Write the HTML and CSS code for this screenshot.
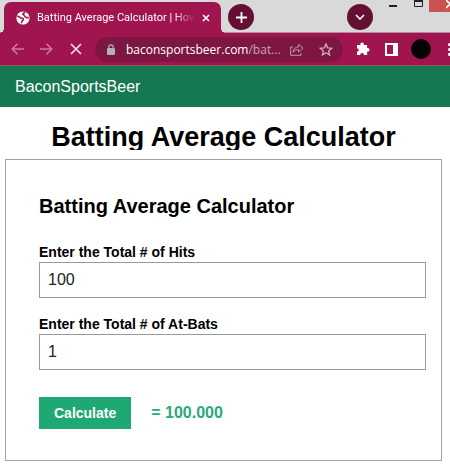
FILE: index.html
```html
<!DOCTYPE html>
<html lang="en">
<head>
    <meta charset="UTF-8">
    <meta name="viewport" content="width=device-width, initial-scale=1.0">
    <title>Batting Average Calculator</title>
    <link rel="stylesheet" href="styles.css">
</head>
<body>
    <div class="browser">
        <div class="tabstrip">
            <div class="tab">
                <svg class="favicon" width="14" height="14" viewBox="0 0 14 14">
                    <circle cx="7" cy="7" r="6.6" fill="#fff"/>
                    <path d="M1.2 5.2C3.4 4.9 3.6 7.1 6 7.2C8 7.3 7.6 9.2 6.4 9.8C5.4 10.5 5.8 11.4 5.2 12.2M9.4 1.8C6.8 1.8 6.2 3.4 7.8 4.1C9 4.7 8.6 6.2 10 6.4C11 6.6 11.6 6.9 12.8 6.4" fill="none" stroke="#a0144f" stroke-width="1.6"/>
                </svg>
                <span class="tab-title">Batting Average Calculator | How</span>
                <button class="tab-close" aria-label="Close tab">
                    <svg width="8" height="8" viewBox="0 0 8 8"><path d="M1 1L7 7M7 1L1 7" stroke="#fff" stroke-width="1.6"/></svg>
                </button>
            </div>
            <button class="round" aria-label="New tab">
                <svg width="11" height="11" viewBox="0 0 11 11"><path d="M5.5 0V11M0 5.5H11" stroke="#fff" stroke-width="1.8"/></svg>
            </button>
            <button class="round search-tabs" aria-label="Search tabs">
                <svg width="10" height="6" viewBox="0 0 10 6"><path d="M1 1L5 5L9 1" fill="none" stroke="#fff" stroke-width="1.6"/></svg>
            </button>
            <div class="window-controls">
                <button aria-label="Minimize"><svg width="8" height="12" viewBox="0 0 8 12"><path d="M0 6H8" stroke="#222" stroke-width="2"/></svg></button>
                <button aria-label="Maximize"><svg width="9" height="12" viewBox="0 0 9 12"><path d="M0.5 0V6.5H8.5V0" fill="none" stroke="#222"/><path d="M0 1H9" stroke="#222" stroke-width="2"/></svg></button>
                <button class="window-close" aria-label="Close"><svg width="4" height="12" viewBox="0 0 4 12"><path d="M0 0L4 4L0 8" fill="none" stroke="#fff" stroke-width="1.6"/></svg></button>
            </div>
        </div>
        <div class="toolbar">
            <button class="tool" aria-label="Back">
                <svg width="13" height="12" viewBox="0 0 13 12"><path d="M13 6H1M6.5 0.7L1.2 6L6.5 11.3" fill="none" stroke="#cd7c9c" stroke-width="1.5"/></svg>
            </button>
            <button class="tool" aria-label="Forward">
                <svg width="13" height="12" viewBox="0 0 13 12"><path d="M0 6H12M6.5 0.7L11.8 6L6.5 11.3" fill="none" stroke="#cd7c9c" stroke-width="1.5"/></svg>
            </button>
            <button class="tool" aria-label="Stop">
                <svg width="12" height="12" viewBox="0 0 12 12"><path d="M1 1L11 11M11 1L1 11" stroke="#f6dfe8" stroke-width="1.7"/></svg>
            </button>
            <div class="address">
                <svg width="8" height="11" viewBox="0 0 8 11"><rect y="4" width="8" height="7" rx="1" fill="#b4b1b6"/><path d="M1.8 4.5V3A2.2 2.2 0 0 1 6.2 3V4.5" fill="none" stroke="#b4b1b6" stroke-width="1.2"/></svg>
                <span class="url">baconsportsbeer.com<span class="path">/bat...</span></span>
                <button aria-label="Share">
                    <svg width="14" height="13" viewBox="0 0 14 13"><path d="M3 4H0.7V12.3H11V10" fill="none" stroke="#c394a8"/><path d="M3 9.3C3.3 5.8 5.2 4 8.6 3.9V1.3L13.1 5.2L8.6 9V6.6C6 6.6 4.4 7.3 3 9.3Z" fill="none" stroke="#c394a8"/></svg>
                </button>
                <button class="bookmark" aria-label="Bookmark">
                    <svg width="14" height="13" viewBox="0 0 14 13"><path d="M7 1L8.6 4.8L12.8 5.2L9.7 7.9L10.6 12L7 9.8L3.4 12L4.3 7.9L1.2 5.2L5.4 4.8Z" fill="none" stroke="#d2acbc" stroke-width="1.3"/></svg>
                </button>
            </div>
            <button class="tool" aria-label="Extensions">
                <svg width="14" height="14" viewBox="0 0 14 14"><path d="M1 3H4.3V2.4A1.8 1.8 0 0 1 7.9 2.4V3H11.1V6.1H11.7A1.8 1.8 0 0 1 11.7 9.7H11.1V13H8A1.9 1.9 0 0 0 4.2 13H1V9.8A1.8 1.8 0 0 0 1 6.2Z" fill="#fff"/></svg>
            </button>
            <button class="tool" aria-label="Side panel">
                <svg width="13" height="13" viewBox="0 0 13 13"><path d="M0 0H13V13H0ZM2 2V11H8V2Z" fill="#fff" fill-rule="evenodd"/></svg>
            </button>
            <button class="tool" aria-label="Profile"><span class="avatar"></span></button>
            <button class="menu" aria-label="Menu">
                <svg width="2" height="13" viewBox="0 0 2 13"><g fill="#fff"><circle cx="1.6" cy="1.6" r="1.6"/><circle cx="1.6" cy="6.5" r="1.6"/><circle cx="1.6" cy="11.4" r="1.6"/></g></svg>
            </button>
        </div>
    </div>

    <header class="site-header">
        <a href="#">BaconSportsBeer</a>
    </header>

    <main>
        <h1>Batting Average Calculator</h1>
        <form class="calculator">
            <h2>Batting Average Calculator</h2>
            <label for="hits">Enter the Total # of Hits</label>
            <input type="text" id="hits" value="100">
            <label for="atbats">Enter the Total # of At-Bats</label>
            <input type="text" id="atbats" value="1">
            <div class="actions">
                <button type="button" id="calculate">Calculate</button>
                <output id="result" for="hits atbats">= 100.000</output>
            </div>
        </form>
    </main>

    <script>
        const hits = document.getElementById('hits');
        const atBats = document.getElementById('atbats');
        const result = document.getElementById('result');

        document.getElementById('calculate').addEventListener('click', () => {
            const average = parseFloat(hits.value) / parseFloat(atBats.value);
            result.textContent = '= ' + average.toFixed(3);
        });
    </script>
</body>
</html>
```
FILE: styles.css
```css
* {
    box-sizing: border-box;
}
body {
    margin: 0;
    background-color: #fff;
    color: #000;
    font-family: "Liberation Sans", Arial, sans-serif;
}
button {
    border: none;
    background: none;
    padding: 0;
}

/* browser window */
.browser {
    overflow: hidden;
    font-family: "Open Sans", "Segoe UI", sans-serif;
}
.browser button {
    display: flex;
    flex-shrink: 0;
    align-items: center;
    justify-content: center;
}
.tabstrip {
    display: flex;
    align-items: flex-start;
    height: 33px;
    padding: 2px 0 0 4px;
    background-color: #d9d9d9;
    border-bottom: 1px solid #b58a9c;
}
.tab {
    position: relative;
    display: flex;
    align-items: center;
    width: 217px;
    height: 31px;
    padding: 0 11px 0 12px;
    border-radius: 7px 7px 0 0;
    background-color: #a0144f;
}
.tab::before,
.tab::after {
    content: "";
    position: absolute;
    bottom: 0;
    width: 5px;
    height: 5px;
}
.tab::before {
    right: 100%;
    background: radial-gradient(circle at 0 0, transparent 5px, #a0144f 5px);
}
.tab::after {
    left: 100%;
    background: radial-gradient(circle at 100% 0, transparent 5px, #a0144f 5px);
}
.favicon {
    flex-shrink: 0;
}
.tab-title {
    flex: 1;
    margin: 0 7px;
    overflow: hidden;
    white-space: nowrap;
    font-family: Roboto, "Segoe UI", sans-serif;
    font-size: 11px;
    color: #fff;
    -webkit-mask-image: linear-gradient(to right, #000 86%, transparent);
    mask-image: linear-gradient(to right, #000 86%, transparent);
}
.round {
    width: 26px;
    height: 26px;
    margin: 2px 0 0 7px;
    border-radius: 50%;
    background-color: #650f35;
}
.search-tabs {
    margin-left: auto;
}
.window-controls {
    display: flex;
    gap: 17px;
    margin: -2px 0 0 16px;
}
.browser .window-close {
    justify-content: flex-end;
    width: 21px;
    height: 12px;
    margin-left: -11px;
    background-color: #ca5350;
}
.toolbar {
    display: flex;
    align-items: center;
    height: 33px;
    padding-left: 3px;
    background-color: #a0144f;
    border-bottom: 1px solid #a25170;
}
.tool {
    width: 29px;
    height: 29px;
}
.address {
    display: flex;
    flex: 1;
    align-items: center;
    min-width: 0;
    height: 25px;
    margin: 0 5px;
    padding: 0 10px 0 12px;
    border-radius: 13px;
    background-color: #7d1642;
}
.address svg {
    flex-shrink: 0;
}
.address button {
    margin-left: 8px;
}
.address .bookmark {
    margin-left: 15px;
}
.url {
    flex: 1;
    margin-left: 11px;
    overflow: hidden;
    white-space: nowrap;
    font-size: 12px;
    color: #fff;
}
.path {
    color: #d0a3b5;
}
.avatar {
    width: 20px;
    height: 20px;
    border-radius: 50%;
    background-color: #060304;
}
.browser .menu {
    justify-content: flex-end;
    width: 15px;
    height: 29px;
}

/* page */
.site-header {
    display: flex;
    align-items: center;
    height: 41px;
    padding: 0 15px;
    background-color: #157852;
}
.site-header a {
    color: #fff;
    font-size: 16px;
    text-decoration: none;
}
main {
    padding: 16px 8px 12px 5px;
}
h1 {
    height: 27px;
    margin: 0 0 9px;
    overflow: hidden;
    font-size: 27px;
    line-height: 29px;
    text-align: center;
}
.calculator {
    padding: 34px 15px 31px 33px;
    border: 1px solid #a3a3a3;
}
h2 {
    margin: 0 0 25px;
    font-size: 20px;
    line-height: 24px;
}
label {
    display: block;
    font-size: 14px;
    font-weight: bold;
    line-height: 18px;
}
input {
    display: block;
    width: 100%;
    height: 36px;
    margin: 1px 0 17px;
    padding: 0 8px;
    border: 1px solid #999;
    color: #222;
    font-family: inherit;
    font-size: 16px;
}
.actions {
    display: flex;
    align-items: center;
    gap: 20px;
    margin-top: 27px;
}
#calculate {
    height: 32px;
    padding: 0 15px;
    background-color: #1ea873;
    color: #fff;
    font-family: inherit;
    font-size: 14px;
    font-weight: bold;
}
#result {
    color: #29a97a;
    font-size: 16px;
    font-weight: bold;
}
```
